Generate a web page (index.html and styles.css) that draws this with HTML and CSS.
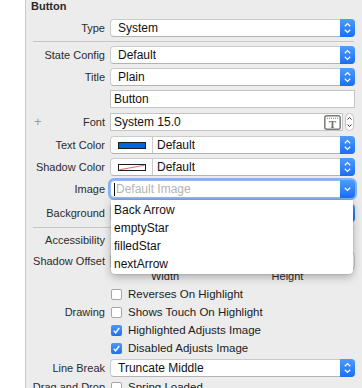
FILE: index.html
```html
<!DOCTYPE html>
<html>
<head>
<meta charset="utf-8">
<link rel="stylesheet" href="styles.css">
</head>
<body>
<div class="window">
  <div class="gutter"></div>
  <div class="panel">
    <div class="heading">Button</div>

    <div class="row mt5">
      <span class="lbl">Type</span>
      <div class="popup"><span class="val">System</span><i class="step"><svg width="15" height="18" viewBox="0 0 15 18"><path d="M4.8 7.2 7.5 4.6 10.2 7.2M4.8 10.8 7.5 13.4 10.2 10.8" fill="none" stroke="#fff" stroke-width="1.3"/></svg></i></div>
    </div>
    <div class="sep"></div>

    <div class="row">
      <span class="lbl">State Config</span>
      <div class="popup"><span class="val">Default</span><i class="step"><svg width="15" height="18" viewBox="0 0 15 18"><path d="M4.8 7.2 7.5 4.6 10.2 7.2M4.8 10.8 7.5 13.4 10.2 10.8" fill="none" stroke="#fff" stroke-width="1.3"/></svg></i></div>
    </div>

    <div class="row mt4">
      <span class="lbl">Title</span>
      <div class="popup"><span class="val">Plain</span><i class="step"><svg width="15" height="18" viewBox="0 0 15 18"><path d="M4.8 7.2 7.5 4.6 10.2 7.2M4.8 10.8 7.5 13.4 10.2 10.8" fill="none" stroke="#fff" stroke-width="1.3"/></svg></i></div>
    </div>

    <div class="row mt4">
      <span class="lbl"></span>
      <div class="field"><span class="fval">Button</span></div>
    </div>

    <div class="row mt5">
      <span class="lbl"><span class="plus">+</span>Font</span>
      <div class="fontctl">
        <div class="field fontfield"><span class="fval">System 15.0</span>
          <svg class="ticon" width="17" height="15" viewBox="0 0 17 15"><rect x="0.8" y="0.8" width="15.4" height="13.4" rx="2" fill="#fff" stroke="#7b7b7b" stroke-width="1.5"/><path d="M3 3.3H14" stroke="#7b7b7b" stroke-width="1" stroke-dasharray="1 1"/><text x="8.5" y="12.6" text-anchor="middle" class="tglyph">T</text></svg>
        </div>
        <div class="mini"><svg width="9" height="18" viewBox="0 0 9 18"><path d="M2.5 6.5 4.5 4.5 6.5 6.5M2.5 11.5 4.5 13.5 6.5 11.5" fill="none" stroke="#333" stroke-width="1"/></svg></div>
      </div>
    </div>

    <div class="row mt5">
      <span class="lbl">Text Color</span>
      <div class="popup well"><span class="swcell"><span class="swatch blue"></span></span><span class="val wv">Default</span><i class="step"><svg width="15" height="18" viewBox="0 0 15 18"><path d="M4.8 7.2 7.5 4.6 10.2 7.2M4.8 10.8 7.5 13.4 10.2 10.8" fill="none" stroke="#fff" stroke-width="1.3"/></svg></i></div>
    </div>

    <div class="row mt4">
      <span class="lbl">Shadow Color</span>
      <div class="popup well"><span class="swcell"><svg class="swsvg" width="28" height="7" viewBox="0 0 28 7"><rect x="0.5" y="0.5" width="27" height="6" fill="#fff" stroke="#1d1d1d"/><path d="M1.5 5.8 26.5 1.2" stroke="#e86a6a" stroke-width="1.1"/></svg></span><span class="val wv">Default</span><i class="step"><svg width="15" height="18" viewBox="0 0 15 18"><path d="M4.8 7.2 7.5 4.6 10.2 7.2M4.8 10.8 7.5 13.4 10.2 10.8" fill="none" stroke="#fff" stroke-width="1.3"/></svg></i></div>
    </div>

    <div class="row mt4">
      <span class="lbl">Image</span>
      <div class="combo-wrap">
        <div class="popup focus"><span class="caret"></span><span class="val ph">Default Image</span><i class="step"><svg width="15" height="18" viewBox="0 0 15 18"><path d="M4.8 7.8 7.5 10.4 10.2 7.8" fill="none" stroke="#fff" stroke-width="1.3"/></svg></i></div>
        <ul class="menu">
          <li>Back Arrow</li>
          <li>emptyStar</li>
          <li>filledStar</li>
          <li>nextArrow</li>
        </ul>
      </div>
    </div>

    <div class="row mt6">
      <span class="lbl">Background</span>
      <div class="popup"><span class="val ph">Default Image</span><i class="step"><svg width="15" height="18" viewBox="0 0 15 18"><path d="M4.8 7.2 7.5 4.6 10.2 7.2M4.8 10.8 7.5 13.4 10.2 10.8" fill="none" stroke="#fff" stroke-width="1.3"/></svg></i></div>
    </div>
    <div class="sep sep2"></div>

    <div class="row short">
      <span class="lbl">Accessibility</span>
      <span></span>
    </div>

    <div class="row mt4">
      <span class="lbl">Shadow Offset</span>
      <div class="offsets">
        <div class="num"></div>
        <div class="num"></div>
      </div>
    </div>
    <div class="row sub">
      <span class="lbl"></span>
      <div class="offlabels"><span>Width</span><span>Height</span></div>
    </div>

    <div class="row check mt3">
      <span class="lbl"></span>
      <span class="cb"><span class="box"></span>Reverses On Highlight</span>
    </div>
    <div class="row check">
      <span class="lbl">Drawing</span>
      <span class="cb"><span class="box"></span>Shows Touch On Highlight</span>
    </div>
    <div class="row check">
      <span class="lbl"></span>
      <span class="cb"><span class="box on"><svg width="11" height="11" viewBox="0 0 11 11"><path d="M2.8 5.8 4.6 7.8 8.2 3" fill="none" stroke="#fff" stroke-width="1.4"/></svg></span>Highlighted Adjusts Image</span>
    </div>
    <div class="row check">
      <span class="lbl"></span>
      <span class="cb"><span class="box on"><svg width="11" height="11" viewBox="0 0 11 11"><path d="M2.8 5.8 4.6 7.8 8.2 3" fill="none" stroke="#fff" stroke-width="1.4"/></svg></span>Disabled Adjusts Image</span>
    </div>

    <div class="row mt2">
      <span class="lbl">Line Break</span>
      <div class="popup"><span class="val">Truncate Middle</span><i class="step"><svg width="15" height="18" viewBox="0 0 15 18"><path d="M4.8 7.2 7.5 4.6 10.2 7.2M4.8 10.8 7.5 13.4 10.2 10.8" fill="none" stroke="#fff" stroke-width="1.3"/></svg></i></div>
    </div>
    <div class="row check mt1">
      <span class="lbl">Drag and Drop</span>
      <span class="cb"><span class="box"></span>Spring Loaded</span>
    </div>
  </div>
</div>
</body>
</html>
```

FILE: styles.css
```css
html, body {
  margin: 0;
  padding: 0;
  overflow: hidden;
  background: #fff;
}
body {
  width: 362px;
  height: 388px;
  font-family: "Liberation Sans", Arial, sans-serif;
  color: #262626;
}
.window {
  display: flex;
  height: 388px;
  overflow: hidden;
}
.gutter {
  width: 25px;
  background: #fff;
  border-right: 1px solid #c9c9c9;
  flex: none;
}
.panel {
  flex: 1;
  background: #ececec;
  display: flex;
  flex-direction: column;
}
.heading {
  flex: none;
  font-size: 11px;
  font-weight: bold;
  line-height: 12px;
  height: 14px;
  padding-left: 5px;
  color: #2a2a2a;
}
.row {
  display: grid;
  grid-template-columns: 79px 245px;
  column-gap: 5px;
  align-items: center;
  height: 18px;
  flex: none;
}
.mt1 { margin-top: 1px; }
.mt2 { margin-top: 2px; }
.mt3 { margin-top: 3px; }
.mt4 { margin-top: 4px; }
.mt5 { margin-top: 5px; }
.mt6 { margin-top: 6px; }
.row.short { height: 16px; }
.row.sub { height: 12px; }
.lbl {
  font-size: 11px;
  text-align: right;
  white-space: nowrap;
  color: #2b2b2b;
  position: relative;
}
.plus {
  position: absolute;
  left: 8px;
  top: -2px;
  color: #9a9a9a;
  font-size: 13px;
}
.sep {
  height: 9px;
  flex: none;
}
.sep::after {
  content: "";
  display: block;
  margin: 4px 8px 0 7px;
  height: 1px;
  background: #c6c6c6;
}
.sep2 { height: 10px; }
.sep2::after { margin-top: 5px; }

.popup {
  display: flex;
  align-items: center;
  box-sizing: border-box;
  height: 18px;
  width: 245px;
  background: #fff;
  border: 1px solid #cbcbcb;
  border-bottom-color: #b3b3b3;
  border-radius: 4px;
  font-size: 12px;
  color: #111;
}
.val {
  padding-left: 7px;
  white-space: nowrap;
  overflow: hidden;
}
.ph { color: #b4b4b4; padding-left: 5px; }
.step {
  margin: -1px -1px -1px auto;
  width: 15px;
  height: 18px;
  flex: none;
  display: block;
  border-radius: 0 4px 4px 0;
  background: linear-gradient(#4d9cfd, #1a6ef4);
}
.step svg { display: block; }

.field {
  box-sizing: border-box;
  height: 18px;
  background: #fff;
  border: 1px solid #c4c4c4;
  display: flex;
  align-items: center;
  font-size: 12px;
  color: #111;
}
.fval { padding-left: 3px; }
.fontctl {
  display: flex;
  align-items: center;
  gap: 2px;
}
.fontfield {
  width: 233px;
}
.ticon {
  margin-left: auto;
  margin-right: 1px;
  display: block;
}
.tglyph {
  font-family: "Liberation Serif", serif;
  font-weight: bold;
  font-size: 11px;
  fill: #6f6f6f;
}
.mini {
  box-sizing: border-box;
  width: 9px;
  height: 18px;
  border: 1px solid #c4c4c4;
  border-radius: 5px;
  background: #fff;
  overflow: hidden;
}
.mini svg { display: block; margin: -1px 0 0 -1px; }

.well .swcell {
  width: 41px;
  height: 100%;
  border-right: 1px solid #cbcbcb;
  display: flex;
  align-items: center;
  justify-content: center;
  flex: none;
}
.swatch {
  box-sizing: border-box;
  width: 28px;
  height: 7px;
  border: 1px solid #1d1d1d;
}
.swatch.blue { background: #0066e2; }
.swsvg { display: block; }
.wv { padding-left: 4px; }

.combo-wrap {
  position: relative;
  height: 18px;
}
.popup.focus {
  border-color: #9ab8e8;
  box-shadow: 0 0 0 2px #86b1f0;
}
.caret {
  width: 1px;
  height: 13px;
  background: #111;
  margin-left: 3px;
}
.popup.focus .ph { padding-left: 1px; }
.menu {
  position: absolute;
  z-index: 5;
  left: 1px;
  top: 20px;
  width: 242px;
  margin: 0;
  padding: 1px 0;
  list-style: none;
  background: #fff;
  border-radius: 0 0 4px 4px;
  box-shadow: 0 3px 9px rgba(0, 0, 0, 0.28), 0 0 0 0.5px rgba(0, 0, 0, 0.12);
}
.menu li {
  height: 18px;
  line-height: 18px;
  padding-left: 3px;
  font-size: 12px;
  color: #111;
}

.offsets {
  display: grid;
  grid-template-columns: 118px 119px;
  column-gap: 8px;
}
.num {
  box-sizing: border-box;
  height: 18px;
  background: #fff;
  border: 1px solid #c4c4c4;
  border-radius: 4px;
}
.offlabels {
  display: grid;
  grid-template-columns: 118px 119px;
  column-gap: 8px;
  font-size: 11px;
  color: #2b2b2b;
  text-align: center;
}
.offlabels span:first-child { padding-right: 8px; }
.offlabels span:last-child { padding-right: 16px; }

.cb {
  display: flex;
  align-items: center;
  font-size: 11.5px;
  color: #222;
  white-space: nowrap;
  padding-left: 1px;
}
.box {
  box-sizing: border-box;
  width: 11px;
  height: 11px;
  border: 1px solid #a6a6a6;
  border-radius: 2px;
  background: #fff;
  margin-right: 6px;
  flex: none;
}
.box.on {
  border: none;
  background: linear-gradient(#4a98fc, #1f70f3);
}
.box svg { display: block; }
```
